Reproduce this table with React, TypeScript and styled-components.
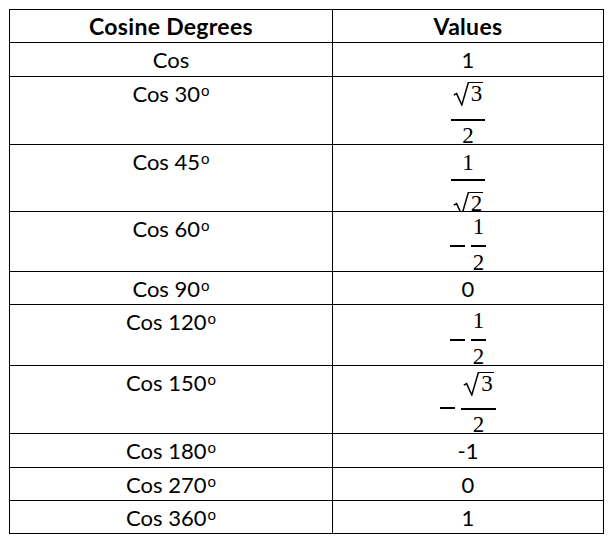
import React from 'react';
import styled, { createGlobalStyle } from 'styled-components';

const GlobalStyle = createGlobalStyle`
  html, body {
    margin: 0;
    padding: 0;
    background: #ffffff;
  }
  body {
    font-family: Lato, "Open Sans", sans-serif;
    color: #000000;
  }
`;

const Page = styled.div`
  padding: 9px 0 0 9px;
`;

const Grid = styled.div`
  display: grid;
  grid-template-columns: 323px 271px;
  width: 595px;
  border-top: 1px solid #000;
  border-left: 1px solid #000;
  box-sizing: border-box;
`;

const Cell = styled.div<{ $h: number }>`
  box-sizing: border-box;
  height: ${(p) => p.$h}px;
  border-right: 1px solid #000;
  border-bottom: 1px solid #000;
  overflow: hidden;
  text-align: center;
  font-size: 22px;
  line-height: 24px;
  padding-top: 5px;
`;

const HeadCell = styled(Cell)`
  font-size: 23px;
  font-weight: 700;
  letter-spacing: 0.3px;
  padding-top: 4px;
`;

const MathCell = styled(Cell)`
  padding-top: 0;
  display: flex;
  justify-content: center;
  align-items: flex-start;
`;

const Deg = styled.sup`
  font-size: 15px;
  line-height: 0;
  vertical-align: 6px;
  margin-left: 1px;
`;

const Expr = styled.div`
  display: inline-flex;
  align-items: flex-start;
  font-family: "Liberation Serif", "DejaVu Serif", serif;
  font-size: 23px;
`;

const Minus = styled.span<{ $top: number }>`
  display: inline-block;
  width: 15px;
  height: 2px;
  margin-top: ${(p) => p.$top}px;
  margin-right: 6px;
  background: #000;
`;

const Fraction = styled.div`
  display: inline-flex;
  flex-direction: column;
  align-items: center;
`;

const Part = styled.div<{ $pt: number; $pb?: number }>`
  line-height: 26px;
  padding: ${(p) => `${p.$pt}px 2px ${p.$pb ?? 0}px`};
`;

const Bar = styled.div`
  align-self: stretch;
  height: 2px;
  background: #000;
`;

const RadicalWrap = styled.span`
  display: flex;
  align-items: stretch;
  line-height: 22px;
`;

const Radicand = styled.span`
  border-top: 1.5px solid #000;
  padding: 0 1px 0 2px;
`;

const RadicalSign = () => (
  <svg width="16" height="24" viewBox="0 0 16 24" style={{ display: 'block' }}>
    <path
      d="M0.8 13.2 L3.6 11.6 L8.8 23 L15.3 0.75 L16 0.75"
      fill="none"
      stroke="#000"
      strokeWidth="1.5"
      strokeLinejoin="miter"
    />
  </svg>
);

const Sqrt = ({ n }: { n: string }) => (
  <RadicalWrap>
    <RadicalSign />
    <Radicand>{n}</Radicand>
  </RadicalWrap>
);

type Row = {
  label: string;
  h: number;
  value: React.ReactNode;
  math?: boolean;
};

const rows: Row[] = [
  { label: 'Cos 30', h: 68, math: true, value: (
    <Fraction>
      <Part $pt={5} $pb={12.5}><Sqrt n="3" /></Part>
      <Bar />
      <Part $pt={2.5}>2</Part>
    </Fraction>
  ) },
  { label: 'Cos 45', h: 67, math: true, value: (
    <Fraction>
      <Part $pt={4.5} $pb={3.5}>1</Part>
      <Bar />
      <Part $pt={11}><Sqrt n="2" /></Part>
    </Fraction>
  ) },
  { label: 'Cos 60', h: 60, math: true, value: (
    <>
      <Minus $top={33} />
      <Fraction>
        <Part $pt={1.5} $pb={5.5}>1</Part>
        <Bar />
        <Part $pt={2.5}>2</Part>
      </Fraction>
    </>
  ) },
  { label: 'Cos 90', h: 33, value: '0' },
  { label: 'Cos 120', h: 61, math: true, value: (
    <>
      <Minus $top={34} />
      <Fraction>
        <Part $pt={2.5} $pb={5.5}>1</Part>
        <Bar />
        <Part $pt={2.5}>2</Part>
      </Fraction>
    </>
  ) },
  { label: 'Cos 150', h: 68, math: true, value: (
    <>
      <Minus $top={41} />
      <Fraction>
        <Part $pt={6} $pb={11.5}><Sqrt n="3" /></Part>
        <Bar />
        <Part $pt={2.5}>2</Part>
      </Fraction>
    </>
  ) },
  { label: 'Cos 180', h: 34, value: '-1' },
  { label: 'Cos 270', h: 33, value: '0' },
  { label: 'Cos 360', h: 33, value: '1' },
];

export default function App() {
  return (
    <Page>
      <GlobalStyle />
      <Grid>
        <HeadCell $h={33}>Cosine Degrees</HeadCell>
        <HeadCell $h={33}>Values</HeadCell>
        <Cell $h={34}>Cos</Cell>
        <Cell $h={34}>1</Cell>
        {rows.map((r) => (
          <React.Fragment key={r.label}>
            <Cell $h={r.h}>
              {r.label}
              <Deg>o</Deg>
            </Cell>
            {r.math ? (
              <MathCell $h={r.h}>
                <Expr>{r.value}</Expr>
              </MathCell>
            ) : (
              <Cell $h={r.h}>{r.value}</Cell>
            )}
          </React.Fragment>
        ))}
      </Grid>
    </Page>
  );
}
